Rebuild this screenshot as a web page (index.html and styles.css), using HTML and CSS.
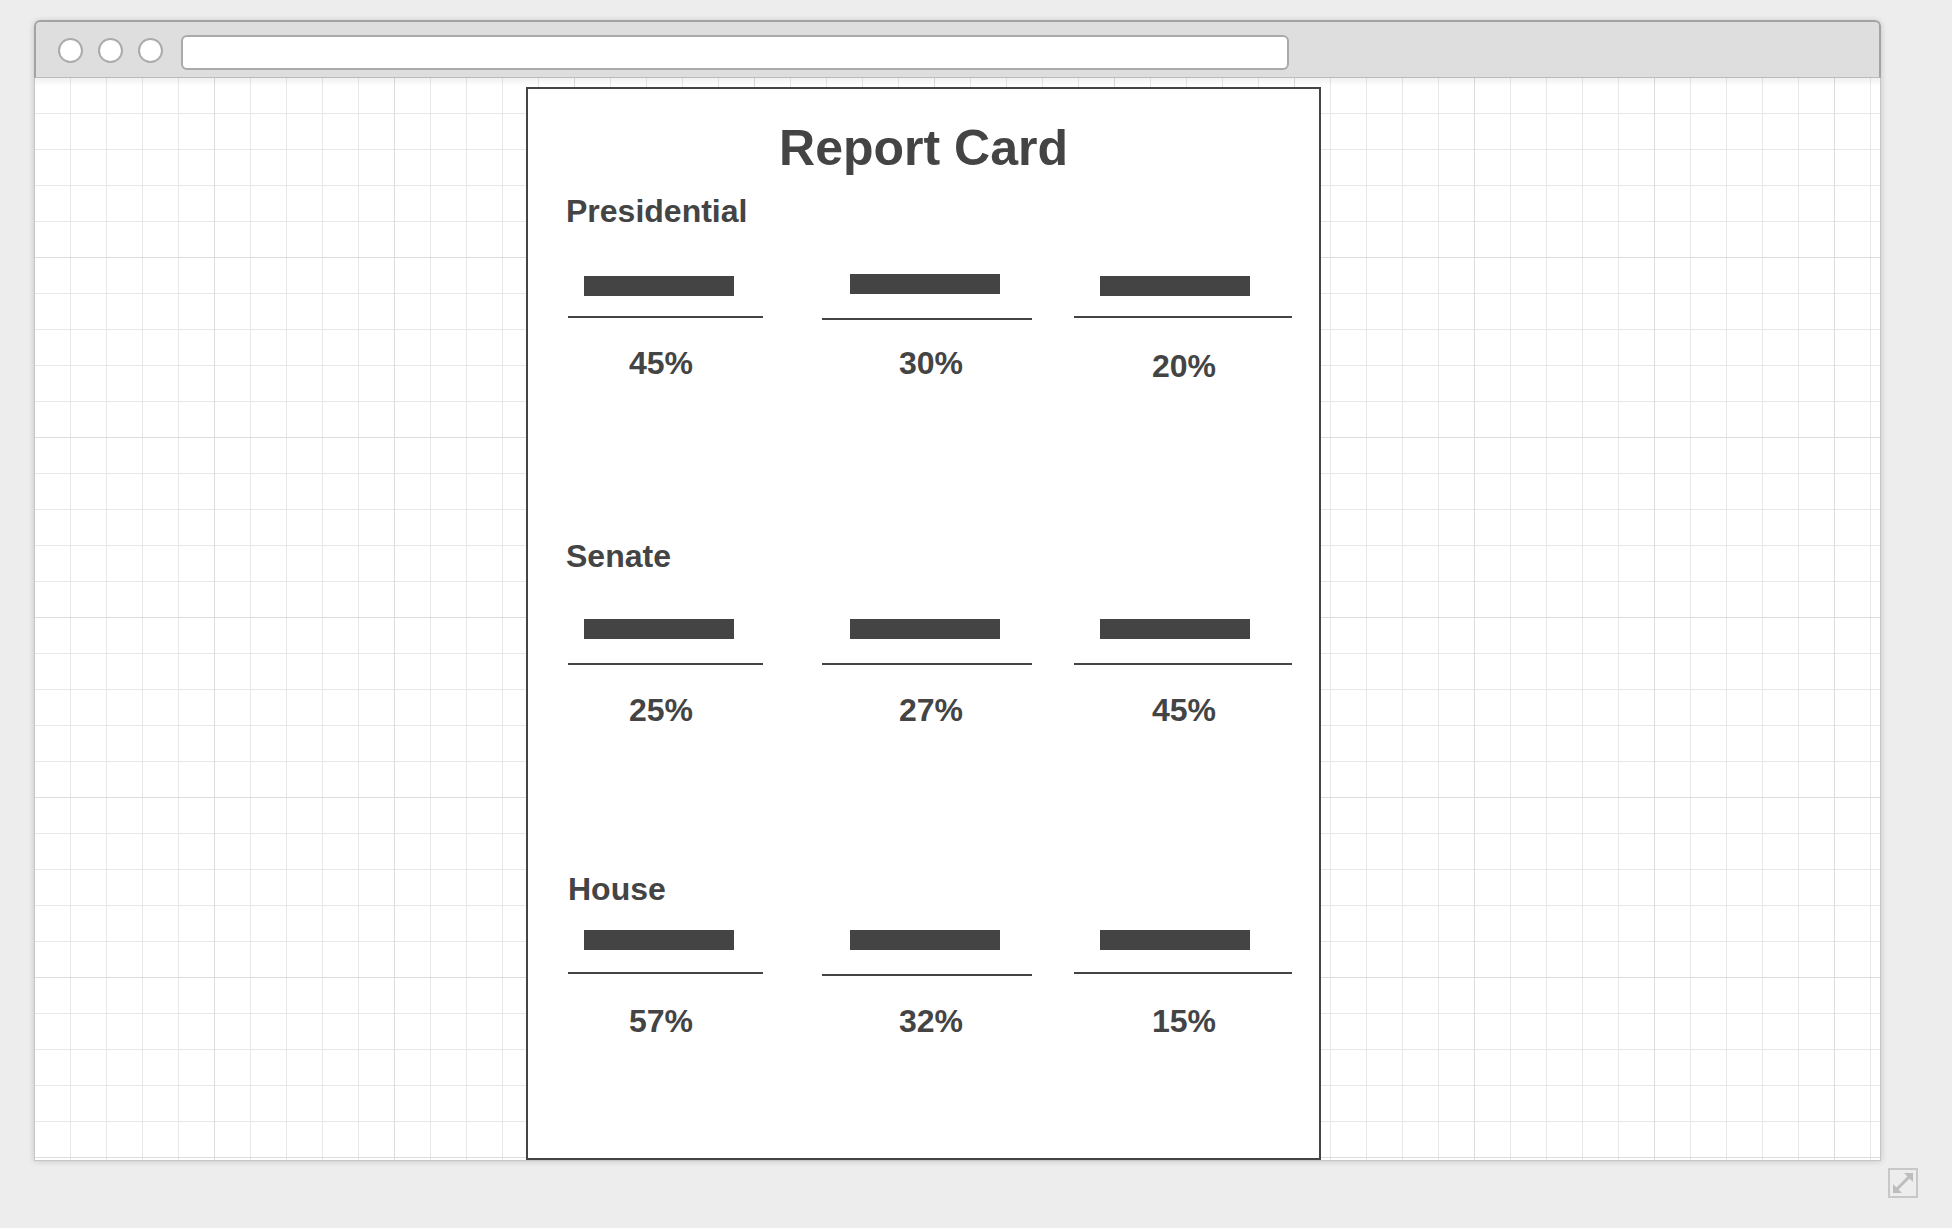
FILE: index.html
```html
<!DOCTYPE html>
<html lang="en">
<head>
<meta charset="utf-8">
<title>Report Card</title>
<link rel="stylesheet" href="styles.css">
</head>
<body>
<div class="page">
  <div class="window">
    <div class="titlebar">
      <span class="dot"></span>
      <span class="dot"></span>
      <span class="dot"></span>
      <div class="address"></div>
    </div>
    <div class="canvas">
      <div class="card">
        <h1 class="card-title">Report Card</h1>

        <section class="race race--pres">
          <h2 class="race-title">Presidential</h2>
          <div class="race-row">
            <div class="cand cand--1"><div class="cand-bar"></div><div class="cand-line"></div><div class="cand-pct">45%</div></div>
            <div class="cand cand--2 cand--bar-up cand--line-down"><div class="cand-bar"></div><div class="cand-line"></div><div class="cand-pct">30%</div></div>
            <div class="cand cand--3 cand--pct-down"><div class="cand-bar"></div><div class="cand-line"></div><div class="cand-pct">20%</div></div>
          </div>
        </section>

        <section class="race race--senate">
          <h2 class="race-title">Senate</h2>
          <div class="race-row">
            <div class="cand cand--1"><div class="cand-bar"></div><div class="cand-line"></div><div class="cand-pct">25%</div></div>
            <div class="cand cand--2"><div class="cand-bar"></div><div class="cand-line"></div><div class="cand-pct">27%</div></div>
            <div class="cand cand--3"><div class="cand-bar"></div><div class="cand-line"></div><div class="cand-pct">45%</div></div>
          </div>
        </section>

        <section class="race race--house">
          <h2 class="race-title race-title--indent">House</h2>
          <div class="race-row">
            <div class="cand cand--1"><div class="cand-bar"></div><div class="cand-line"></div><div class="cand-pct">57%</div></div>
            <div class="cand cand--2 cand--line-down"><div class="cand-bar"></div><div class="cand-line"></div><div class="cand-pct">32%</div></div>
            <div class="cand cand--3"><div class="cand-bar"></div><div class="cand-line"></div><div class="cand-pct">15%</div></div>
          </div>
        </section>
      </div>
    </div>
  </div>
  <div class="footer">
    <svg class="resize" width="30" height="30" viewBox="0 0 30 30" aria-hidden="true">
      <rect x="1" y="1" width="28" height="28" fill="none" stroke="#c8c8c8" stroke-width="2"/>
      <line x1="9" y1="21" x2="21" y2="9" stroke="#bdbdbd" stroke-width="3"/>
      <polygon points="25,5 25,14 16,5" fill="#bdbdbd"/>
      <polygon points="5,25 5,16 14,25" fill="#bdbdbd"/>
    </svg>
  </div>
</div>
</body>
</html>
```

FILE: styles.css
```css
* {
  box-sizing: border-box;
}

html, body {
  margin: 0;
  padding: 0;
}

body {
  background: #ededed;
  font-family: "Liberation Sans", Arial, sans-serif;
  color: #444444;
  width: 1952px;
  height: 1228px;
  overflow: hidden;
}

.page {
  padding: 20px 34px 0 34px;
}

.window {
  width: 1847px;
  height: 1140px;
  display: flex;
  flex-direction: column;
  border-radius: 6px 6px 0 0;
  box-shadow: 0 1px 6px rgba(0, 0, 0, 0.18);
  background: #ffffff;
}

.titlebar {
  height: 58px;
  flex: none;
  display: flex;
  align-items: flex-start;
  padding: 16px 0 0 22px;
  background: #dedede;
  border: 2px solid #a3a3a3;
  border-bottom: 1px solid #bcbcbc;
  border-radius: 6px 6px 0 0;
}

.dot {
  width: 25px;
  height: 25px;
  border-radius: 50%;
  background: #ffffff;
  border: 2px solid #ababab;
  margin-right: 15px;
  flex: none;
}

.dot:nth-child(3) {
  margin-right: 18px;
}

.address {
  width: 1108px;
  height: 35px;
  margin-top: -3px;
  background: #ffffff;
  border: 2px solid #aaaaaa;
  border-radius: 6px;
}

.canvas {
  flex: 1;
  padding: 9px 0 0 491px;
  border: 1px solid #c6c6c6;
  border-top: none;
  background-color: #ffffff;
  background-image:
    linear-gradient(to bottom, rgba(0, 0, 0, 0.06), rgba(0, 0, 0, 0) 8px),
    linear-gradient(to right, #dcdcdc 1px, transparent 1px),
    linear-gradient(to bottom, #dcdcdc 1px, transparent 1px),
    linear-gradient(to right, #e8e8e8 1px, transparent 1px),
    linear-gradient(to bottom, #e8e8e8 1px, transparent 1px);
  background-size:
    100% 100%,
    180px 180px,
    180px 180px,
    36px 36px,
    36px 36px;
  background-position:
    0 0,
    -1px 0,
    0 -1px,
    -1px 0,
    0 -1px;
  background-repeat: no-repeat, repeat, repeat, repeat, repeat;
}

.card {
  width: 795px;
  height: 1073px;
  background: #ffffff;
  border: 2px solid #444444;
  padding: 30px 0 0 38px;
}

.card-title {
  margin: 0 0 0 -38px;
  font-size: 50px;
  line-height: 58px;
  font-weight: 700;
  text-align: center;
}

.race {
  --bar-gap: 46px;
  --line-gap: 20px;
  --pct-gap: 27px;
}

.race--pres {
  margin-top: 15px;
}

.race--senate {
  margin-top: 153px;
  --bar-gap: 44px;
  --line-gap: 24px;
  --pct-gap: 27px;
}

.race--house {
  margin-top: 142px;
  --bar-gap: 22px;
  --line-gap: 22px;
  --pct-gap: 29px;
}

.race-title {
  margin: 0;
  font-size: 32px;
  line-height: 38px;
  font-weight: 700;
}

.race-title--indent {
  padding-left: 2px;
}

.race-row {
  display: grid;
  grid-template-columns: 254px 252px 218px;
  margin: var(--bar-gap) 0 0 2px;
}

.cand {
  display: flex;
  flex-direction: column;
  align-items: flex-start;
}

.cand--1 {
  --bar-x: 16px;
  --line-w: 195px;
  --pct-w: 186px;
}

.cand--2 {
  --bar-x: 28px;
  --line-w: 210px;
  --pct-w: 218px;
}

.cand--3 {
  --bar-x: 26px;
  --line-w: 218px;
  --pct-w: 220px;
}

.cand-bar {
  width: 150px;
  height: 20px;
  background: #444444;
  margin-left: var(--bar-x);
}

.cand-line {
  width: var(--line-w);
  height: 2px;
  background: #444444;
  margin-top: var(--line-gap);
}

.cand-pct {
  width: var(--pct-w);
  margin-top: var(--pct-gap);
  font-size: 32px;
  line-height: 36px;
  font-weight: 700;
  text-align: center;
}

.cand--bar-up .cand-bar {
  margin-top: -2px;
  margin-bottom: 2px;
}

.cand--line-down .cand-line {
  margin-top: calc(var(--line-gap) + 2px);
  margin-bottom: -2px;
}

.cand--pct-down .cand-pct {
  margin-top: calc(var(--pct-gap) + 3px);
}

.footer {
  display: flex;
  justify-content: flex-end;
  padding-top: 8px;
}

.resize {
  display: block;
}
```
